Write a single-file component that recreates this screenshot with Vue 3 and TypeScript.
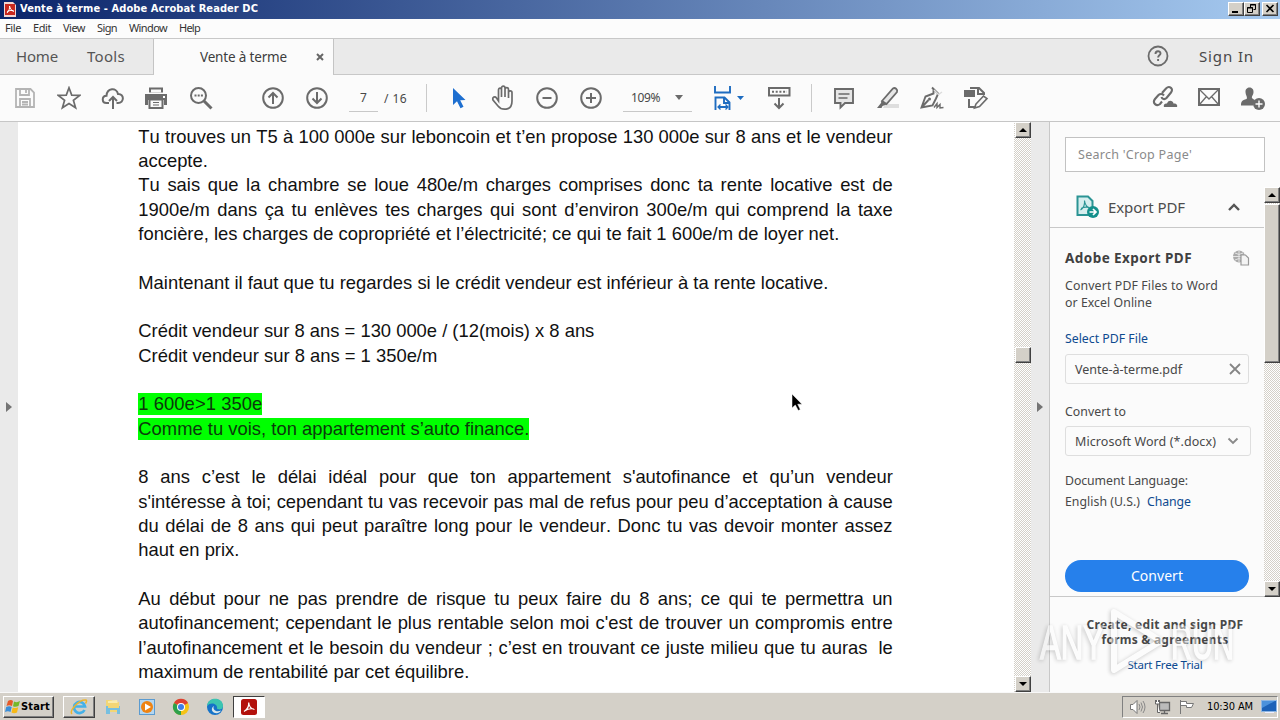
<script setup lang="ts">
import type { Directive } from 'vue'

interface DocLine {
  text: string
  width?: number
  full?: boolean
  mark?: boolean
}

const menus = [
  { label: 'File', width: 16 },
  { label: 'Edit', width: 18 },
  { label: 'View', width: 22 },
  { label: 'Sign', width: 20 },
  { label: 'Window', width: 38 },
  { label: 'Help', width: 21 },
]

const lines: DocLine[] = [
  { text: 'Tu trouves un T5 à 100\u00a0000e sur leboncoin et t’en propose 130\u00a0000e sur 8 ans et le vendeur', full: true },
  { text: 'accepte.', width: 69.5 },
  { text: 'Tu sais que la chambre se loue 480e/m charges comprises donc ta rente locative est de', full: true },
  { text: '1900e/m dans ça tu enlèves tes charges qui sont d’environ 300e/m qui comprend la taxe', full: true },
  { text: 'foncière, les charges de copropriété et l’électricité; ce qui te fait 1 600e/m de loyer net.', width: 701 },
  { text: '' },
  { text: 'Maintenant il faut que tu regardes si le crédit vendeur est inférieur à ta rente locative.', width: 690 },
  { text: '' },
  { text: 'Crédit vendeur sur 8 ans = 130 000e / (12(mois) x 8 ans', width: 456 },
  { text: 'Crédit vendeur sur 8 ans = 1 350e/m', width: 299 },
  { text: '' },
  { text: '1 600e>1 350e', width: 124, mark: true },
  { text: 'Comme tu vois, ton appartement s’auto finance.', width: 391, mark: true },
  { text: '' },
  { text: '8 ans c’est le délai idéal pour que ton appartement s\'autofinance et qu’un vendeur', full: true },
  { text: 's\'intéresse à toi; cependant tu vas recevoir pas mal de refus pour peu d’acceptation à cause', full: true },
  { text: 'du délai de 8 ans qui peut paraître long pour le vendeur. Donc tu vas devoir monter assez', full: true },
  { text: 'haut en prix.', width: 101 },
  { text: '' },
  { text: 'Au début pour ne pas prendre de risque tu peux faire du 8 ans; ce qui te permettra un', full: true },
  { text: 'autofinancement; cependant le plus rentable selon moi c\'est de trouver un compromis entre', full: true },
  { text: 'l’autofinancement et le besoin du vendeur ; c’est en trouvant ce juste milieu que tu auras \u00a0le', full: true },
  { text: 'maximum de rentabilité par cet équilibre.', width: 331 },
]

// Tracks a label's letters so that it fills the given width in pixels.
const vFit: Directive<HTMLElement, number | undefined> = {
  mounted(el, { value }) {
    const count = el.textContent?.length ?? 0
    if (!value || !count) return
    const natural = el.getBoundingClientRect().width
    el.style.letterSpacing = `${(value - natural) / count}px`
  },
}
</script>

<template>
  <div class="screen">
    <header class="titlebar">
      <svg class="app-icon" width="12" height="15" viewBox="0 0 12 15">
        <path d="M0 0h9l3 3v12H0z" fill="#f3d6d3" />
        <rect x="1" y="2" width="10" height="11" fill="#c8281e" />
        <path d="M3 11C5 9 6 6 5.500 4M5.500 4C6 7 8 9 10 9.500M3 9.500Q6 8 9.500 8.500" stroke="#fff" fill="none" />
      </svg>
      <span v-fit="238" class="title">Vente à terme - Adobe Acrobat Reader DC</span>
      <div class="win-buttons">
        <span class="btn3d wb"><svg width="14" height="12" viewBox="0 0 14 12"><path d="M3 9h6" stroke="#000" stroke-width="2" /></svg></span>
        <span class="btn3d wb"><svg width="14" height="12" viewBox="0 0 14 12"><path d="M5.500 4V1.500h5v5H8.500M2.500 4.500h5v5h-5z M5 2h6M2 5h6" stroke="#000" fill="none" /></svg></span>
        <span class="btn3d wb last"><svg width="14" height="12" viewBox="0 0 14 12"><path d="M3.500 2l7 7M10.500 2l-7 7" stroke="#000" stroke-width="1.600" /></svg></span>
      </div>
    </header>

    <nav class="menubar">
      <span v-for="m in menus" :key="m.label" v-fit="m.width">{{ m.label }}</span>
    </nav>

    <div class="tabs">
      <div class="left-tabs">
        <span v-fit="42">Home</span>
        <span v-fit="38">Tools</span>
      </div>
      <div class="doc-tab">
        <span v-fit="87">Vente à terme</span>
        <svg width="8" height="8" viewBox="0 0 8 8"><path d="M1 1l6 6M7 1L1 7" stroke="#666" stroke-width="2" /></svg>
      </div>
      <div class="tab-rest">
        <svg width="22" height="22" viewBox="0 0 22 22" fill="none" stroke="#6b6b6b">
          <circle cx="11" cy="11" r="9.500" stroke-width="1.800" />
          <path d="M8.500 9c0-3.500 5-3.500 5-.5 0 1.800-2.400 1.900-2.400 4M11.100 14v2" stroke-width="1.900" />
        </svg>
        <span v-fit="55">Sign In</span>
      </div>
    </div>

    <div class="toolbar">
      <span class="slot"><svg width="24" height="24" viewBox="0 0 24 24" fill="none" stroke="#b4b4b4" stroke-width="1.800"><path d="M3 3h14.500L21 6.500V21H3zM7 3v6h9V3M7 21v-8h10v8M13 4v3M9 16h6M9 18.500h6" /></svg></span>
      <span class="slot"><svg width="24" height="24" viewBox="0 0 24 24" fill="none" stroke="#6b6b6b" stroke-width="1.700"><path d="M12 1.800l2.700 7.300 8 .3-6.300 4.800 2.200 7.600L12 17.500l-6.600 4.300 2.200-7.600L1.300 9.400l8-.3z" /></svg></span>
      <span class="slot"><svg width="24" height="24" viewBox="0 0 24 24" fill="none" stroke="#6b6b6b" stroke-width="2"><path d="M8 17H5.500C.500 17 .500 10 5.500 9.800 6 2 15.500 1 17 8c6.500-.5 6.500 9 0 9h-1.500M12 23V11.500M8 15l4-4 4 4" /></svg></span>
      <span class="slot"><svg width="26" height="24" viewBox="0 0 26 24"><path d="M5 1.500h14v5H5zM1 8h22v11h-3v-5H4v5H1z" fill="#6b6b6b" /><path d="M5.500 13.500h13v8.500h-13z" fill="#fafafa" stroke="#6b6b6b" stroke-width="2" /><path d="M9 16.500h6M9 19h6" stroke="#6b6b6b" stroke-width="1.200" /><path d="M7 3.500h10v3H7z" fill="#fafafa" /><path d="M19 10h2v2h-2z" fill="#fff" /></svg></span>
      <span class="slot"><svg width="24" height="24" viewBox="0 0 24 24" fill="none" stroke="#6b6b6b" stroke-width="2"><circle cx="9.500" cy="9.500" r="7.500" /><path d="M15 15l7.500 7.500" stroke-width="3" /><path d="M5.500 9.500h8.500" stroke-dasharray="2 1.200" /></svg></span>
      <span class="slot gap-before"><svg width="24" height="24" viewBox="0 0 24 24" fill="none" stroke="#6b6b6b" stroke-width="2"><circle cx="12" cy="12" r="9.800" /><path d="M12 18V7M7.500 11.500L12 7l4.500 4.500" /></svg></span>
      <span class="slot"><svg width="24" height="24" viewBox="0 0 24 24" fill="none" stroke="#6b6b6b" stroke-width="2"><circle cx="12" cy="12" r="9.800" /><path d="M12 6v11M7.500 12.500L12 17l4.500-4.500" /></svg></span>
      <div class="page-no">
        <span class="page-field">7</span>
        <span v-fit="23" class="page-total">/ 16</span>
      </div>
      <i class="rule"></i>
      <span class="slot after-rule"><svg width="24" height="24" viewBox="0 0 24 24"><path d="M6 2v17l4-3.800 3.500 7 3-1.500-3.300-6.500 5.300-.2z" fill="#1e6fd0" /></svg></span>
      <span class="slot"><svg width="24" height="26" viewBox="0 0 24 26" fill="none" stroke="#6b6b6b" stroke-width="1.700"><path d="M7.500 14V5c0-2.500 3-2.500 3 0v7V3c0-2.500 3.500-2.500 3.500 0v9V4.500c0-2.500 3.500-2.500 3.500 0V13V7.500c0-2.300 3.500-2.300 3.500 0V16c0 11-11 9-14 5L2 15c-1-3 2-4 3.500-2L7.500 16V13" /></svg></span>
      <span class="slot"><svg width="24" height="24" viewBox="0 0 24 24" fill="none" stroke="#6b6b6b" stroke-width="2"><circle cx="12" cy="12" r="9.800" /><path d="M7.500 12h9" /></svg></span>
      <span class="slot"><svg width="24" height="24" viewBox="0 0 24 24" fill="none" stroke="#6b6b6b" stroke-width="2"><circle cx="12" cy="12" r="9.800" /><path d="M7 12h10M12 7v10" /></svg></span>
      <div class="zoom-field">
        <span v-fit="29">109%</span>
        <i class="caret"></i>
      </div>
      <span class="fit"><svg width="32" height="26" viewBox="0 0 32 26" fill="none" stroke="#1e6cc0" stroke-width="1.900"><path d="M2 1v6.500h15V1M2.500 25V12.500h9l5 5V25M11 12.500V18h5.500M5 22h10" /><path d="M7.500 19.500L5 22l2.500 2.500M12.500 19.500L15 22l-2.500 2.500" stroke-width="1.300" /><path d="M24 11h7l-3.500 4z" fill="#1e6cc0" stroke="none" /></svg></span>
      <span class="slot"><svg width="24" height="24" viewBox="0 0 24 24" fill="none" stroke="#6b6b6b" stroke-width="2"><path d="M2 2h20.500v7.500H2zM12 12v10M7.500 17.500L12 22l4.500-4.500" /><path d="M5 5.700h15" stroke-dasharray="2 1.700" /></svg></span>
      <i class="rule second"></i>
      <span class="slot"><svg width="24" height="24" viewBox="0 0 24 24" fill="none" stroke="#6b6b6b" stroke-width="1.900"><path d="M3 3h18v14h-8l-4.500 4.500V17H3z" fill="#e6e6e6" /><path d="M6.500 8h11M6.500 12h9" stroke-width="1.500" /></svg></span>
      <span class="slot"><svg width="24" height="24" viewBox="0 0 24 24"><path d="M9 18h14v4H7z" fill="#dedede" /><path d="M6 15L17 2.500c2-1.500 5 1 4 3.500L10.500 18z" fill="#e6e6e6" stroke="#6b6b6b" stroke-width="1.800" /><path d="M5.500 14.500l5 4-4 1.500-1 2H1l4-5z" fill="#6b6b6b" /></svg></span>
      <span class="slot"><svg width="24" height="24" viewBox="0 0 24 24" fill="none" stroke="#6b6b6b" stroke-width="1.900"><path d="M12 1.500l7 7M13.500 3v4.500L5.500 10.500 1.500 21.500l11-2 3.500-7 2-4.500M1.500 21.500l7-7.500" /><path d="M14 4l4.500 4.500L22 6" stroke="#dcdcdc" stroke-width="1.500" /><circle cx="9.500" cy="13" r="1.500" fill="#6b6b6b" stroke="none" /><path d="M14 21.500l3-4v4l3-3v3.500l3.500-.5" stroke-width="1.400" /></svg></span>
      <span class="slot"><svg width="26" height="24" viewBox="0 0 26 24" fill="none" stroke="#6b6b6b" stroke-width="2"><path d="M6 13v8h7M7 2h9l5 5v2M15 2v6h5" /><path d="M2 5h9v5H2z" fill="#6b6b6b" /><path d="M13 18l7.500-8 3.500 2.500-7.500 8L11.500 22z" fill="#fafafa" stroke-width="1.600" /></svg></span>
      <div class="share">
        <span class="slot"><svg width="26" height="24" viewBox="0 0 26 24" fill="none" stroke="#6b6b6b" stroke-width="2.100"><path d="M10 8l4-4.500c3.500-3.500 8 .5 5 4L14.500 13c-2 2-4.500 1-5-1M12 10.500c-1.500-2-4-2-5.500-.5L3 14c-3 4 1.500 8 5 5l2-2.500" /><path d="M12 22c-1-3 2-4 3-3.500 1.500-4 6-3 6.500 0C24 18 26 20 25 22z" fill="#6b6b6b" stroke="none" /></svg></span>
        <span class="slot"><svg width="24" height="24" viewBox="0 0 24 24" fill="none" stroke="#6b6b6b"><path d="M2 4h20v16H2z" stroke-width="2" /><path d="M2.500 4.500L12 14l9.500-9.500M3 19l6.500-7.500M21 19l-6.500-7.500" stroke-width="1.300" /></svg></span>
        <span class="slot"><svg width="26" height="26" viewBox="0 0 26 26" fill="#6b6b6b"><path d="M5.500 7C5 1 14 1 13.500 7c0 3-2 4-1.500 6 1 1.500 2 1 3 2.500L13 20.500H1c0-4 1-5.500 5.500-6.500 1.500-1.500-1-4-1-7z" /><circle cx="19" cy="19" r="6" /><path d="M19 15.500v7M15.500 19h7" stroke="#fff" stroke-width="1.400" /></svg></span>
      </div>
    </div>

    <main class="main">
      <aside class="strip left"><i></i></aside>
      <article class="document">
        <p v-for="(line, i) in lines" :key="i" class="line" :class="{ full: line.full }">
          <template v-if="line.full">
            <template v-for="(word, w) in line.text.split(' ')" :key="w"><span class="word">{{ word }}</span>{{ ' ' }}</template>
          </template>
          <span v-else v-fit="line.width" :class="{ mark: line.mark }">{{ line.text }}</span>
        </p>
      </article>
      <div class="scroll">
        <b class="btn3d"><i class="up"></i></b>
        <b class="btn3d thumb"></b>
        <b class="btn3d bottom"><i class="down"></i></b>
      </div>
      <aside class="strip right"><i></i></aside>

      <section class="panel">
        <div class="search"><span v-fit="114">Search 'Crop Page'</span></div>
        <div class="panel-view">
          <div class="panel-body">
            <div class="export-head">
              <svg width="23" height="24" viewBox="0 0 23 24"><path d="M1.500 1.500H12l4.500 4.500v14h-15z" fill="#d6eeee" stroke="#2b9494" stroke-width="2" /><path d="M4.500 15c3-2 4.500-5 4-9.500.5 4 2 6.500 5 7M5 13.500q4-2 8-1" fill="none" stroke="#2b9494" stroke-width="1.100" /><circle cx="17" cy="17" r="6" fill="#14908c" /><path d="M13.500 17h6M17 14l3 3-3 3" stroke="#fff" stroke-width="1.700" fill="none" /></svg>
              <span v-fit="77">Export PDF</span>
              <svg class="chev" width="14" height="10" viewBox="0 0 14 10"><path d="M2 8l5-5 5 5" fill="none" stroke="#555" stroke-width="2.400" /></svg>
            </div>
            <div class="export-form">
              <div class="heading">
                <span v-fit="127">Adobe Export PDF</span>
                <svg width="18" height="16" viewBox="0 0 18 16"><circle cx="7" cy="6.500" r="6" fill="#aaa" /><path d="M1 6.500h12M7 1v11M3 3q4 3 8 0M3 10q4-3 8 0" stroke="#e4e4e4" fill="none" /><path d="M9 5h4.500L16.500 8v7H9z" fill="#f4f4f4" stroke="#999" stroke-width="1.200" /></svg>
              </div>
              <p class="text desc"><span v-fit="153">Convert PDF Files to Word</span><br><span v-fit="87">or Excel Online</span></p>
              <a class="text link"><span v-fit="83">Select PDF File</span></a>
              <div class="field file"><span v-fit="107">Vente-à-terme.pdf</span><svg width="12" height="12" viewBox="0 0 12 12"><path d="M1 1l10 10M11 1L1 11" stroke="#858585" stroke-width="1.800" /></svg></div>
              <p class="text to"><span v-fit="61">Convert to</span></p>
              <div class="field format"><span v-fit="141">Microsoft Word (*.docx)</span><svg width="12" height="8" viewBox="0 0 12 8"><path d="M1.500 1.500L6 6l4.500-4.500" fill="none" stroke="#8a8a8a" stroke-width="1.900" /></svg></div>
              <p class="text lang"><span v-fit="123">Document Language:</span></p>
              <p class="text eng"><span v-fit="75">English (U.S.)</span><a v-fit="44">Change</a></p>
              <button class="convert"><span v-fit="52">Convert</span></button>
            </div>
          </div>
          <div class="scroll side">
            <b class="btn3d"><i class="up"></i></b>
            <b class="btn3d thumb"></b>
            <b class="btn3d bottom"><i class="down"></i></b>
          </div>
        </div>
        <footer class="promo">
          <strong v-fit="157">Create, edit and sign PDF</strong>
          <strong v-fit="127">forms &amp; agreements</strong>
          <a v-fit="75">Start Free Trial</a>
        </footer>
      </section>
    </main>

    <footer class="taskbar">
      <span class="btn3d start">
        <svg width="16" height="16" viewBox="0 0 16 16"><path d="M3 2q3-2 5 0L7 7Q4 5.500 1.500 7z" fill="#e65a28" /><path d="M9 2.500q3 1.500 6-.5L13.500 7q-3 1.500-5.500.3z" fill="#76b82a" /><path d="M1.200 8q3-1.500 5.500 0L5.500 13Q3 11.500 0 13z" fill="#3a8ed8" /><path d="M7.700 8.500q3 1.200 5.500-.2L12 13.500Q9 15 6.500 13.500z" fill="#f7b916" /></svg>
        <span v-fit="29">Start</span>
      </span>
      <span class="btn3d task ie"><svg width="18" height="18" viewBox="0 0 18 18"><path d="M14.500 12a5.500 5.500 0 1 1 .5-3.500H5" fill="none" stroke="#45b1e8" stroke-width="2.700" /><path d="M2 16C-1 13 9 1 16 2c1 .5.500 2-.5 3.500" fill="none" stroke="#eeb52c" stroke-width="1.500" /></svg></span>
      <span class="task"><svg width="18" height="18" viewBox="0 0 18 18"><path d="M2 2h6l1 2h6v10H2z" fill="#f2d675" /><path d="M4 3l9-1 2 9H4z" fill="#f9ecae" /><path d="M2 8h14v8h-3v-4H6v4H2z" fill="#76bfe0" /><path d="M4 5h11v5H4z" fill="#f2d675" /></svg></span>
      <span class="task"><svg width="17" height="17" viewBox="0 0 17 17"><rect x=".5" y=".5" width="15" height="15" fill="#b4d6f0" stroke="#5b9bd0" /><circle cx="8" cy="8" r="6" fill="#ef8312" /><path d="M6 4.500l6 3.500-6 3.500z" fill="#fff" /></svg></span>
      <span class="task"><svg width="18" height="18" viewBox="0 0 18 18"><circle cx="9" cy="9" r="8" fill="#f5c316" /><path d="M9 9L2 5a8 8 0 0 1 14 0z" fill="#de4033" /><path d="M9 9v0l0 8A8 8 0 0 1 2 5z" fill="#2da04c" /><circle cx="9" cy="9" r="4" fill="#fff" /><circle cx="9" cy="9" r="3" fill="#3f7ee8" /></svg></span>
      <span class="task"><svg width="18" height="18" viewBox="0 0 18 18"><circle cx="9" cy="9" r="8" fill="#1673c8" /><path d="M1 8C2-2 17-1 17 8c0 4-5 4-6 2.500C12 6 5 3 1 8z" fill="#3cc5b0" /><path d="M8 8c-2 3 2 7 7 4.500-2 4-8 3-9 0-.6-2 .5-4 2-4.500z" fill="#d9e6ea" /></svg></span>
      <span class="task active"><svg width="17" height="17" viewBox="0 0 17 17"><rect width="16" height="16" rx="2.500" fill="#b3110c" /><path d="M3 12.500c3.500-2 5-5 4.700-9C8 7 10 10 13.500 10.500M3.500 12q4.500-3 9.500-2" stroke="#fff" stroke-width="1.200" fill="none" /></svg></span>
      <div class="tray">
        <svg width="18" height="16" viewBox="0 0 18 16" fill="none" stroke="#888"><path d="M1.500 5.500H4L8 1.500v13L4 10.500H1.500z" fill="#fff" stroke="#777" /><path d="M10 5q2 3 0 6M12 3.500q3 4.500 0 9M14 2q4 6 0 12" /></svg>
        <svg width="17" height="16" viewBox="0 0 17 16" fill="none" stroke="#666"><path d="M5.500 3.500h10v8h-10zM7 14.500h7M10.500 12v2" fill="#bbb" stroke-width="1.300" /><path d="M1.500 1v4h4V1M3.500 5v8.500H6M2.500 1v2M4.500 1v2" fill="#fff" /></svg>
        <svg width="17" height="16" viewBox="0 0 17 16" fill="#fff" stroke="#777"><path d="M2.500 1v14M2.500 2.500h6v2h7l-2 4h-5v-2h-6z" /></svg>
        <span v-fit="46">10:30 AM</span>
        <svg width="16" height="14" viewBox="0 0 16 14"><rect x=".5" y=".5" width="15" height="11" fill="#1c62b8" stroke="#8fb7e2" /><path d="M1 1h13L1 8z" fill="#4b92dc" /><path d="M4 12.500h9" stroke="#eef" /></svg>
      </div>
    </footer>

    <svg class="watermark" width="230" height="80" viewBox="0 0 230 80">
      <text x="12" y="57" textLength="64" lengthAdjust="spacingAndGlyphs">ANY</text>
      <path d="M86 10l47 29-47 29z" />
      <text x="143" y="57" textLength="63" lengthAdjust="spacingAndGlyphs">RUN</text>
    </svg>
    <svg class="cursor" width="13" height="20" viewBox="0 0 13 20"><path d="M1 1v14l3.300-3 3 5.500 2-1-2.600-5.300H11z" fill="#000" stroke="#fff" stroke-width=".5" /></svg>
  </div>
</template>

<style>
body { margin: 0; overflow: hidden; }
</style>

<style scoped>
* { box-sizing: border-box; }
.screen { position: relative; width: 1280px; height: 720px; display: flex; flex-direction: column; overflow: hidden; background: #fbfbfb; color: #484848; font-family: "Noto Sans", sans-serif; font-size: 12px; white-space: nowrap; }
p { margin: 0; }
svg { flex: none; display: block; }
.btn3d { background: #d4d0c8; border: 1px solid; border-color: #fff #404040 #404040 #fff; box-shadow: inset -1px -1px #808080; }

.titlebar { height: 19px; display: flex; align-items: center; padding: 0 2px 1px 4px; background: linear-gradient(90deg, #0a246a, #a6caf0); }
.title { margin-left: 4px; color: #fff; font: bold 11px/16px "DejaVu Sans Condensed", "DejaVu Sans", sans-serif; }
.win-buttons { margin-left: auto; display: flex; }
.wb { width: 16px; height: 14px; overflow: hidden; }
.wb.last { margin-left: 2px; }

.menubar { height: 19px; display: flex; align-items: center; gap: 12px; padding: 0 0 2px 5px; font-size: 11px; color: #333; background: #fcfcfc; }

.tabs { height: 37px; display: flex; border-top: 1px solid #c8c8c8; font-size: 15px; line-height: 34px; }
.left-tabs { width: 154px; display: flex; gap: 29px; padding: 0 0 0 16px; background: #eaeaea; border-right: 1px solid #c4c4c4; border-bottom: 1px solid #c8c8c8; color: #555; }
.doc-tab { width: 179px; display: flex; align-items: center; gap: 29px; padding: 0 0 0 46px; font-size: 13.500px; color: #3d3d3d; }
.tab-rest { flex: 1; display: flex; align-items: center; justify-content: flex-end; gap: 30px; padding: 0 26px 2px 0; background: #eaeaea; border-left: 1px solid #c4c4c4; border-bottom: 1px solid #c8c8c8; }

.toolbar { height: 47px; display: flex; align-items: center; padding-left: 3px; border-bottom: 1px solid #c6c6c6; background: #fbfbfb; }
.slot { width: 44px; flex: none; display: flex; justify-content: center; }
.gap-before { margin-left: 28px; }
.page-no { width: 87px; flex: none; display: flex; align-items: center; padding-left: 10px; height: 27px; }
.page-field { width: 29px; height: 27px; border-bottom: 1px solid #c8c8c8; text-align: center; line-height: 26px; }
.page-total { margin-left: 6px; }
.rule { width: 1px; height: 28px; flex: none; background: #cacaca; }
.after-rule { margin-left: 10px; }
.zoom-field { width: 69px; height: 27px; flex: none; margin: 0 10px; padding: 0 9px 0 8px; display: flex; align-items: center; justify-content: space-between; border-bottom: 1px solid #c8c8c8; }
.caret { border: 4px solid transparent; border-top: 5px solid #6b6b6b; border-bottom: 0; }
.fit { width: 55px; flex: none; padding-left: 11px; }
.rule.second { margin: 0 10px; }
.share { display: flex; margin-left: auto; padding-right: 5px; }

.main { height: 570px; display: flex; }
.strip { width: 18px; flex: none; display: flex; align-items: center; justify-content: center; background: #eaeaea; }
.strip i { border: 5px solid transparent; border-left: 6px solid #747474; border-right: 0; }
.strip.right { width: 19px; border-right: 1px solid #c8c8c8; }
.document { width: 996px; flex: none; padding: 2.600px 0 0 120.300px; background: #fff; color: #111; font: 18.400px/24.350px "Liberation Sans", Arial, sans-serif; font-kerning: none; }
.line { width: 754.500px; height: 24.350px; }
.line.full { text-align: justify; text-align-last: justify; white-space: normal; }
.word { display: inline-block; text-align: left; text-align-last: left; white-space: nowrap; }
.mark { background: #00ff00; color: #0b3a0b; display: inline-block; height: 22px; line-height: 22px; }

.scroll { width: 17px; flex: none; display: flex; flex-direction: column; padding-left: 1px; background: repeating-conic-gradient(#d4d0c8 0 25%, #fff 0 50%) 0 0 / 2px 2px; }
.scroll b { height: 16px; flex: none; display: flex; align-items: center; justify-content: center; }
.scroll .thumb { margin-top: 209px; }
.scroll .bottom { margin-top: auto; }
.up, .down { border: 4px solid transparent; }
.up { border-bottom-color: #000; border-top: 0; }
.down { border-top-color: #000; border-bottom: 0; }

.panel { flex: 1; display: flex; flex-direction: column; background: #fbfbfb; }
.search { width: 200px; height: 35px; flex: none; margin: 15px 0 0 15px; padding-left: 12px; border: 1px solid #c2c2c2; background: #fff; font-size: 12.500px; line-height: 34px; color: #8a8a8a; }
.panel-view { height: 410px; margin-top: 15px; display: flex; }
.panel-body { width: 214px; flex: none; }
.scroll.side { width: 16px; padding: 0; }
.scroll.side .thumb { height: 159px; margin-top: 1px; }
.export-head { height: 41px; display: flex; align-items: center; padding-left: 26px; border-bottom: 1px solid #c8c8c8; font-size: 15px; color: #4d4d4d; }
.export-head span { margin-left: 9px; }
.chev { margin-left: 42px; }
.export-form { padding: 20px 0 0 15px; border-bottom: 1px solid #c8c8c8; height: 369px; }
.heading { display: flex; height: 20px; align-items: center; justify-content: space-between; width: 185px; font-size: 13.500px; font-weight: 700; color: #404040; }
.text { display: block; height: 17px; line-height: 17px; font-size: 12.300px; color: #484848; }
.desc { height: 34px; margin-top: 9px; }
.link { margin-top: 19px; }
.link, .eng a, .promo a { color: #0d4a90; }
.field { display: flex; align-items: center; justify-content: space-between; width: 184px; height: 30px; padding: 0 7px 0 9px; border: 1px solid #dedede; border-radius: 3px; font-size: 12.500px; }
.file { margin-top: 7px; }
.to { margin-top: 19px; }
.format { width: 186px; margin-top: 6px; padding-right: 11px; }
.lang { margin-top: 16px; }
.eng { margin-top: 4px; display: flex; gap: 7px; }
.convert { display: block; width: 184px; height: 32px; margin: 50px 0 0; padding: 0; border: 0; border-radius: 16px; background: #2680eb; color: #fff; font: 14px/32px "Noto Sans", sans-serif; }
.promo { display: flex; flex-direction: column; align-items: center; padding: 20px 0 0; line-height: 15px; }
.promo a { margin-top: 10px; font-size: 11.500px; }

.taskbar { height: 28px; display: flex; align-items: center; padding: 1px 2px 0 3px; background: #d4d0c8; border-top: 1px solid #f8f8f8; }
.start { display: flex; align-items: center; width: 51px; height: 22px; padding-left: 1px; margin-right: 9px; color: #000; font: bold 11px/18px "DejaVu Sans Condensed", sans-serif; }
.task { width: 34px; height: 22px; display: flex; align-items: center; justify-content: center; }
.task.ie { width: 32px; margin-right: 1px; }
.task.active { width: 32px; margin-left: 1px; background: #fff; border: 1px solid; border-color: #404040 #fff #fff #404040; }
.tray { display: flex; align-items: center; width: 156px; height: 22px; margin-left: auto; padding-left: 6px; border: 1px solid; border-color: #808080 #fff #fff #808080; color: #000; font: 11px/18px "DejaVu Sans Condensed", sans-serif; }
.tray svg + svg { margin-left: 7px; }
.tray span { margin-left: 12px; }
.tray span + svg { margin-left: 8px; }

.watermark { position: absolute; left: 1028px; top: 602px; opacity: .45; fill: #fff; filter: drop-shadow(-1px 1px 2px rgba(0, 0, 0, .45)); }
.watermark text { font: 48px "Liberation Sans", sans-serif; stroke: #fff; stroke-width: 1.500px; }
.watermark path { fill: none; stroke: #fff; stroke-width: 6px; stroke-linejoin: round; }
.cursor { position: absolute; left: 791px; top: 393px; }
</style>
